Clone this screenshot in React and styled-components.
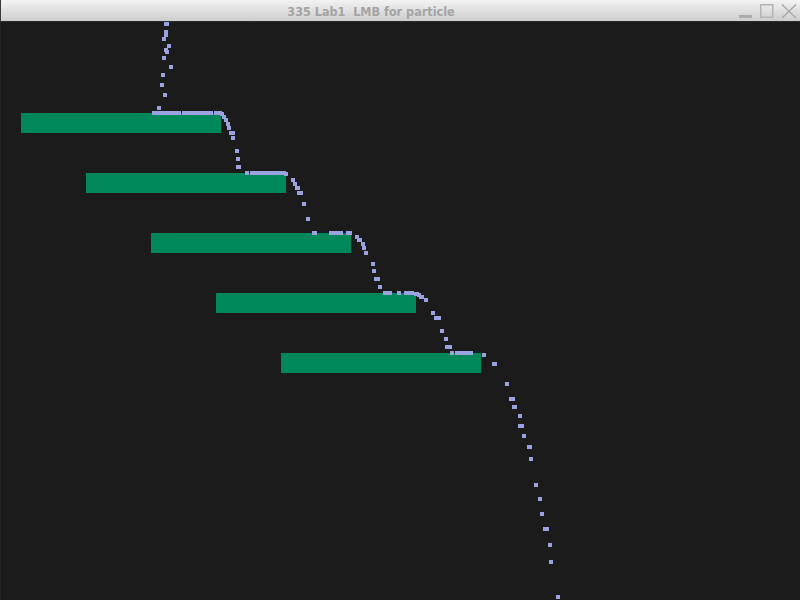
import React from 'react';
import styled, { createGlobalStyle } from 'styled-components';

const GlobalStyle = createGlobalStyle`
  html, body {
    margin: 0;
    padding: 0;
    background: #1b1b1b;
  }
`;

const Window = styled.div`
  width: 800px;
  height: 600px;
  display: flex;
  flex-direction: column;
  overflow: hidden;
`;

const TitleBar = styled.div`
  height: 21px;
  flex: 0 0 21px;
  display: flex;
  align-items: center;
  background: linear-gradient(#f3f3f3, #cdcdcd);
  border-left: 1px solid #3a3a3a;
  border-bottom: 1px solid #2c2c2c;
`;

const Title = styled.div`
  flex: 1;
  text-align: center;
  white-space: pre;
  font-family: "DejaVu Sans Condensed", "DejaVu Sans", sans-serif;
  font-weight: bold;
  font-size: 12.5px;
  color: #a4a4a4;
  padding-top: 1px;
  padding-left: 2px;
`;

const Controls = styled.div`
  display: flex;
  align-items: center;
  gap: 7px;
  padding-right: 3px;
`;

const Canvas = styled.div`
  flex: 1;
  background: #1b1b1b;
  border-left: 1px solid #222;

  svg {
    display: block;
  }
`;

const PLATFORMS = [
  [21, 113],
  [86, 173],
  [151, 233],
  [216, 293],
  [281, 353],
];

// x, y, width of each particle run (4px tall)
const PARTICLES = [
  [164, 22, 5], [164, 30, 4], [164, 33, 4], [162, 37, 4], [167, 44, 4],
  [164, 48, 4], [165, 50, 4], [162, 56, 4], [169, 65, 4], [161, 73, 4],
  [160, 83, 4], [163, 93, 4], [157, 106, 4],
  [152, 111, 29], [182, 111, 31], [214, 111, 8], [220, 112, 4], [222, 115, 4],
  [224, 118, 4], [226, 122, 4], [227, 126, 4], [229, 131, 6], [231, 136, 4],
  [235, 149, 4], [236, 157, 4], [236, 165, 5],
  [245, 171, 4], [250, 171, 36], [284, 172, 4], [291, 178, 4], [293, 182, 4],
  [295, 186, 5], [297, 191, 6], [302, 202, 4], [306, 217, 4],
  [312, 231, 5], [329, 231, 14], [346, 231, 6], [355, 235, 4], [357, 238, 5],
  [361, 242, 4], [362, 246, 4], [364, 251, 4], [371, 262, 4], [372, 269, 4],
  [374, 277, 6], [378, 285, 4], [383, 291, 9], [397, 291, 4], [404, 291, 10],
  [414, 292, 5], [417, 293, 4], [419, 295, 5], [424, 298, 4],
  [431, 311, 4], [434, 316, 7], [440, 329, 4], [444, 337, 4], [445, 345, 7],
  [450, 351, 4], [455, 351, 18], [482, 353, 4], [492, 362, 5], [505, 382, 4],
  [509, 397, 6], [512, 405, 5], [518, 414, 4], [518, 424, 6], [522, 434, 4],
  [527, 445, 5], [529, 457, 4], [534, 483, 4], [538, 497, 4], [540, 512, 4],
  [543, 527, 6], [548, 543, 4], [549, 560, 4], [556, 595, 4],
];

function WindowControls() {
  return (
    <Controls>
      <svg width="14" height="16" viewBox="0 0 14 16">
        <rect x="0" y="12" width="13" height="3" fill="#ababab" />
      </svg>
      <svg width="14" height="16" viewBox="0 0 14 16">
        <rect x="0.75" y="1.75" width="12" height="12.5" fill="none" stroke="#b4b4b4" strokeWidth="1.5" />
      </svg>
      <svg width="16" height="16" viewBox="0 0 16 16">
        <path d="M1 1.5 L15 15 M15 1.5 L1 15" stroke="#ababab" strokeWidth="1.6" />
      </svg>
    </Controls>
  );
}

function Scene() {
  return (
    <svg width="799" height="578" viewBox="1 22 799 578" shapeRendering="crispEdges">
      {PLATFORMS.map(([x, y]) => (
        <rect key={`p${x}`} x={x} y={y} width="200" height="20" fill="#00885a" />
      ))}
      {PARTICLES.map(([x, y, w], i) => (
        <rect key={i} x={x} y={y} width={w} height="4" fill="#9aa3e0" />
      ))}
    </svg>
  );
}

export default function App() {
  return (
    <>
      <GlobalStyle />
      <Window>
        <TitleBar>
          <Title>{'335 Lab1  LMB for particle'}</Title>
          <WindowControls />
        </TitleBar>
        <Canvas>
          <Scene />
        </Canvas>
      </Window>
    </>
  );
}
